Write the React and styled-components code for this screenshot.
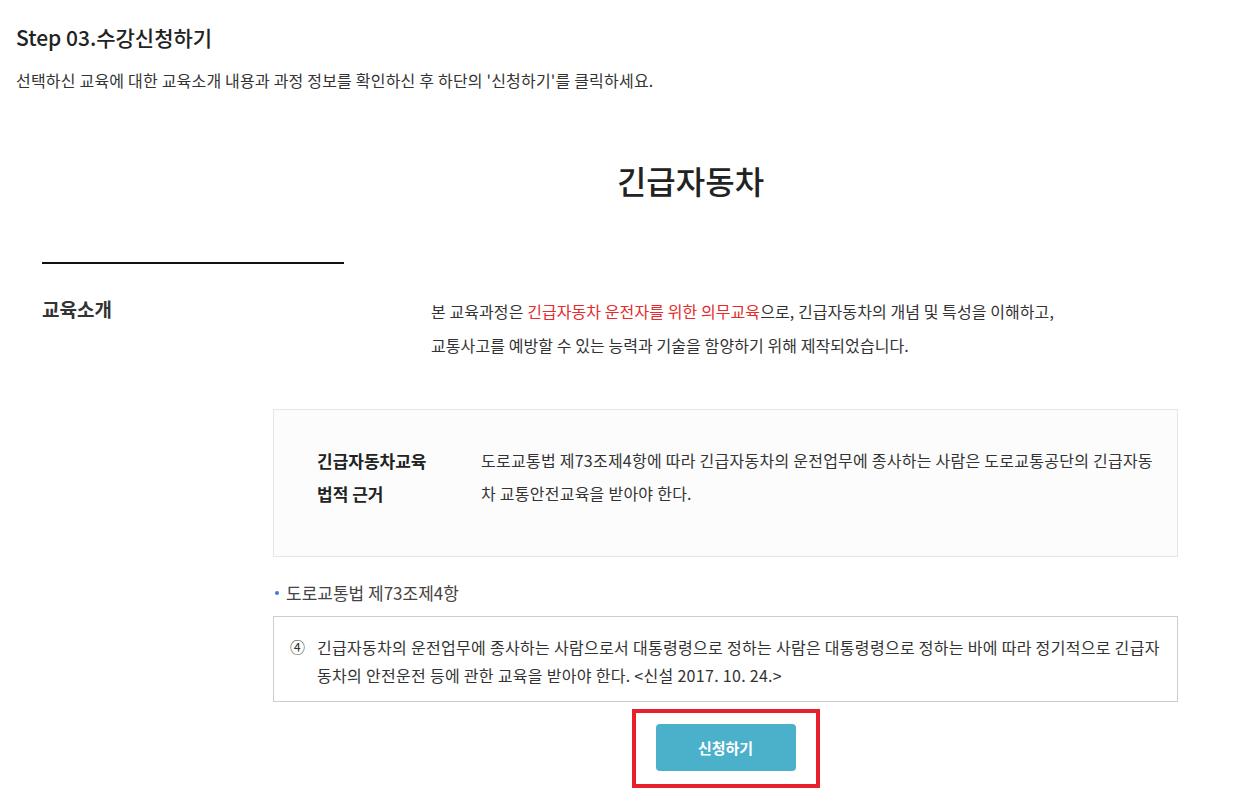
import styled, {createGlobalStyle} from 'styled-components';

const GlobalStyle = createGlobalStyle`
  body {
    margin: 0;
    background: #fff;
    font-family: "Noto Sans CJK KR", "Noto Sans", sans-serif;
    color: #333;
  }
`;

export default function App() {
  return (
    <>
      <GlobalStyle />
      <Page>
        <Header>
          <StepTitle>Step 03.수강신청하기</StepTitle>
          <StepDesc>
            선택하신 교육에 대한 교육소개 내용과 과정 정보를 확인하신 후 하단의 '신청하기'를 클릭하세요.
          </StepDesc>
        </Header>

        <CourseTitle>긴급자동차</CourseTitle>

        <IntroRow>
          <LabelCol>
            <SectionLabel>교육소개</SectionLabel>
          </LabelCol>
          <IntroText>
            본 교육과정은 <Highlight>긴급자동차 운전자를 위한 의무교육</Highlight>으로, 긴급자동차의 개념 및 특성을 이해하고,
            <br />
            교통사고를 예방할 수 있는 능력과 기술을 함양하기 위해 제작되었습니다.
          </IntroText>
        </IntroRow>

        <Detail>
          <InfoBox>
            <InfoLabel>
              긴급자동차교육
              <br />
              법적 근거
            </InfoLabel>
            <InfoText>
              도로교통법 제73조제4항에 따라 긴급자동차의 운전업무에 종사하는 사람은 도로교통공단의 긴급자동
              <br />
              차 교통안전교육을 받아야 한다.
            </InfoText>
          </InfoBox>

          <LawTitle>도로교통법 제73조제4항</LawTitle>
          <LawBox>
            <LawNum>④</LawNum>
            <LawText>
              긴급자동차의 운전업무에 종사하는 사람으로서 대통령령으로 정하는 사람은 대통령령으로 정하는 바에 따라 정기적으로 긴급자
              <br />
              동차의 안전운전 등에 관한 교육을 받아야 한다. &lt;신설 2017. 10. 24.&gt;
            </LawText>
          </LawBox>

          <ButtonRow>
            <Marker>
              <ApplyButton type="button">신청하기</ApplyButton>
            </Marker>
          </ButtonRow>
        </Detail>
      </Page>
    </>
  );
}

const Page = styled.div`
  width: 1233px;
  padding-bottom: 10px;
`;

const Header = styled.div`
  padding: 22px 16px 0;
`;

const StepTitle = styled.h2`
  margin: 0;
  font-size: 21px;
  line-height: 30px;
  font-weight: 500;
  color: #222;
`;

const StepDesc = styled.p`
  margin: 17px 0 0;
  font-size: 16px;
  line-height: 22px;
  color: #333;
  letter-spacing: 0.2px;
`;

const CourseTitle = styled.h1`
  margin: 67px 0 0;
  padding-left: 148px;
  text-align: center;
  font-size: 32px;
  line-height: 44px;
  font-weight: 500;
  color: #222;
`;

const IntroRow = styled.div`
  display: grid;
  grid-template-columns: 302px 1fr;
  margin: 60px 0 0 42px;
  align-items: start;
`;

const LabelCol = styled.div`
  border-top: 2px solid #111;
  padding-top: 30px;
`;

const SectionLabel = styled.h3`
  margin: 0;
  font-size: 19px;
  line-height: 30px;
  font-weight: 700;
  color: #333;
`;

const IntroText = styled.p`
  margin: 32px 0 0;
  padding-left: 87px;
  font-size: 16px;
  line-height: 34px;
  color: #333;
  letter-spacing: 0.08px;
`;

const Highlight = styled.span`
  color: #e52b2b;
`;

const Detail = styled.div`
  margin: 47px 0 0 273px;
  width: 905px;
  display: flex;
  flex-direction: column;
`;

const InfoBox = styled.div`
  display: grid;
  grid-template-columns: 164px 1fr;
  height: 148px;
  box-sizing: border-box;
  padding: 34px 0 0 43px;
  background: #fcfcfc;
  border: 1px solid #e6e6e6;
`;

const InfoLabel = styled.div`
  font-size: 17px;
  line-height: 33px;
  font-weight: 700;
  color: #222;
`;

const InfoText = styled.div`
  font-size: 16px;
  line-height: 33px;
  color: #333;
  letter-spacing: 0.25px;
  white-space: nowrap;
`;

const LawTitle = styled.div`
  margin-top: 24px;
  font-size: 17px;
  line-height: 24px;
  color: #444;
  display: flex;
  align-items: center;

  &::before {
    content: '';
    width: 4px;
    height: 4px;
    border-radius: 50%;
    background: #3d7cd1;
    margin: 0 7px 0 2px;
  }
`;

const LawBox = styled.div`
  margin-top: 11px;
  display: flex;
  box-sizing: border-box;
  height: 86px;
  padding: 16px 16px 0;
  border: 1px solid #cdcdcd;
`;

const LawNum = styled.span`
  flex: 0 0 27px;
  font-size: 15px;
  line-height: 28px;
  color: #333;
`;

const LawText = styled.p`
  margin: 0;
  font-size: 16px;
  line-height: 28px;
  color: #333;
  letter-spacing: 0.3px;
  white-space: nowrap;
`;

const ButtonRow = styled.div`
  display: flex;
  justify-content: center;
  margin-top: 7px;
`;

const Marker = styled.div`
  border: 4px solid #e8202a;
  padding: 11px 20px 13px;
`;

const ApplyButton = styled.button`
  display: block;
  width: 140px;
  height: 47px;
  border: 0;
  border-radius: 4px;
  background: #4bb0ca;
  color: #fff;
  font-family: inherit;
  font-size: 15px;
  font-weight: 700;
  cursor: pointer;
`;
